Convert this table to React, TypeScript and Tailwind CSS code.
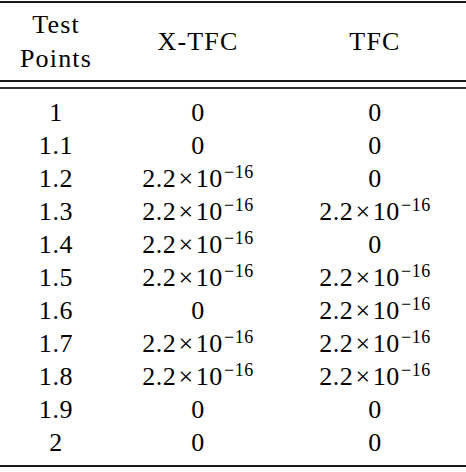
const rows: [string, string, string][] = [
  ['1', '0', '0'],
  ['1.1', '0', '0'],
  ['1.2', 'e', '0'],
  ['1.3', 'e', 'e'],
  ['1.4', 'e', '0'],
  ['1.5', 'e', 'e'],
  ['1.6', '0', 'e'],
  ['1.7', 'e', 'e'],
  ['1.8', 'e', 'e'],
  ['1.9', '0', '0'],
  ['2', '0', '0'],
];

// 'e' stands for the machine-epsilon value
function Cell({ value }: { value: string }) {
  if (value !== 'e') return <span>{value}</span>;
  return (
    <span>
      2.2<span className="mx-[2px]">×</span>10
      <span className="relative -top-[9px] ml-px text-[18px] leading-none">−16</span>
    </span>
  );
}

export default function App() {
  return (
    <div className="w-[466px] h-[472px] bg-white text-black font-['Liberation_Serif','Times_New_Roman',serif]">
      <div className="pt-px">
        <div className="h-[2px] bg-[#1a1a1a]" />
        <div className="grid grid-cols-[112px_172px_182px] items-center pt-[5px] pb-[4px] text-[26px] leading-[34px] tracking-[1.2px]">
          <div className="text-center">
            Test
            <br />
            Points
          </div>
          <div className="text-center">X-TFC</div>
          <div className="text-center">TFC</div>
        </div>
        <div className="h-[2px] bg-[#1a1a1a]" />
        <div className="h-[5px]" />
        <div className="h-[2px] bg-[#333]" />
        <div className="pt-[7px] pb-[6px]">
          {rows.map(([p, x, t]) => (
            <div
              key={p}
              className="grid grid-cols-[112px_172px_182px] text-[26px] leading-[33px] tracking-[0.6px] text-center"
            >
              <Cell value={p} />
              <Cell value={x} />
              <Cell value={t} />
            </div>
          ))}
        </div>
        <div className="h-[2px] bg-[#1a1a1a]" />
      </div>
    </div>
  );
}
